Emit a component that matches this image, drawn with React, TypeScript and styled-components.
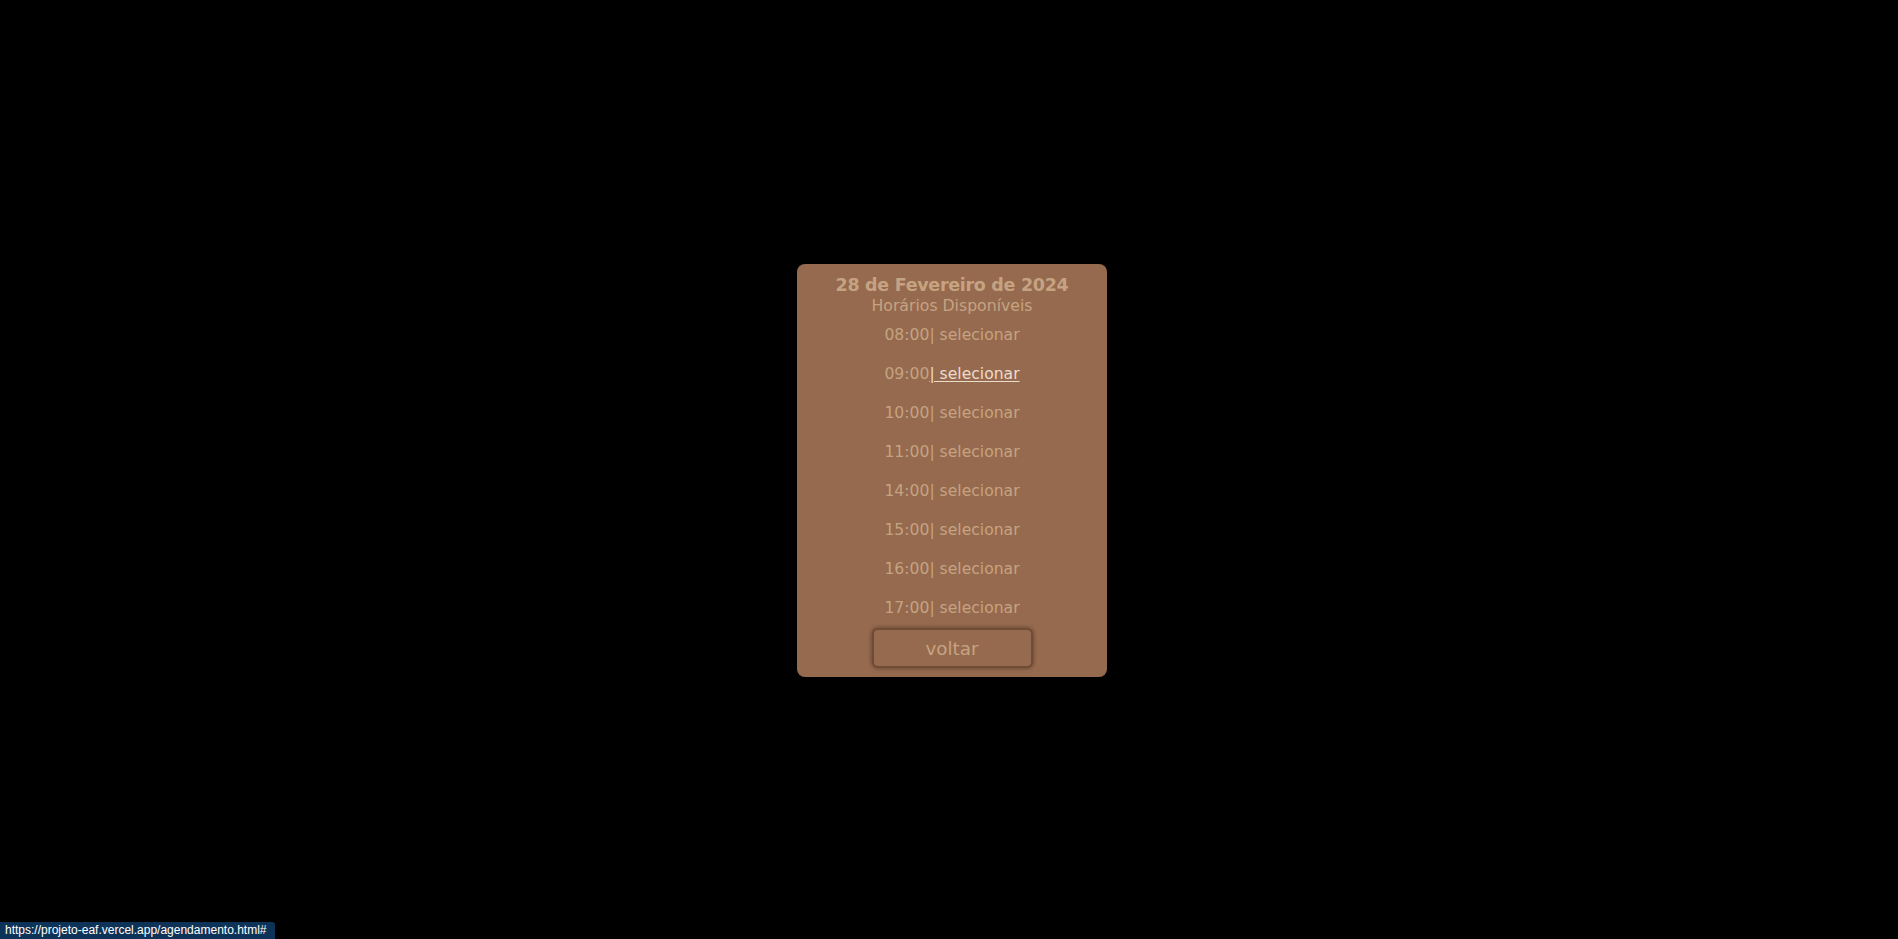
import React from "react";
import styled, { createGlobalStyle } from "styled-components";

const GlobalStyle = createGlobalStyle`
  html, body {
    margin: 0;
    padding: 0;
    background: #000;
    font-family: "DejaVu Sans", "Liberation Sans", sans-serif;
  }
`;

const Page = styled.main`
  min-height: 100vh;
  box-sizing: border-box;
  padding-top: 2px;
  display: flex;
  align-items: center;
  justify-content: center;
  background: #000;
`;

const Card = styled.section`
  width: 310px;
  box-sizing: border-box;
  padding: 10px 0 9px;
  background: #966a4e;
  border-radius: 8px;
  display: flex;
  flex-direction: column;
  align-items: center;
  color: #c5a382;
  margin-left: 6px;
`;

const Title = styled.h1`
  margin: 0;
  font-size: 17.5px;
  line-height: 22px;
  font-weight: 700;
  letter-spacing: -0.3px;
  color: #c5a382;
`;

const Subtitle = styled.h2`
  margin: 0;
  font-size: 15.7px;
  line-height: 19px;
  font-weight: 400;
  color: #c5a382;
`;

const SlotList = styled.ul`
  list-style: none;
  margin: 10px 0 0;
  padding: 0;
  display: flex;
  flex-direction: column;
  align-items: center;
  gap: 19px;
`;

const Slot = styled.li`
  font-size: 15.6px;
  line-height: 20px;
  color: #c5a382;
  white-space: nowrap;
`;

const SelectLink = styled.a<{ $active?: boolean }>`
  color: ${(p) => (p.$active ? "#ecdccd" : "#c5a382")};
  text-decoration: ${(p) => (p.$active ? "underline" : "none")};
  text-underline-offset: 2px;
  cursor: pointer;
`;

const BackButton = styled.button`
  margin-top: 10px;
  width: 161px;
  height: 40px;
  box-sizing: border-box;
  background: #966a4e;
  border: 2px solid #6f4c36;
  border-radius: 6px;
  box-shadow: 0 0 4px rgba(40, 22, 10, 0.55);
  color: #c5a382;
  font-family: "DejaVu Sans", "Liberation Sans", sans-serif;
  font-size: 18.3px;
  padding: 0;
  cursor: pointer;
`;

const StatusBubble = styled.div`
  position: fixed;
  left: 0;
  bottom: 0;
  height: 17px;
  padding: 0 8px 0 5px;
  background: #0e3358;
  color: #ffffff;
  border-top-right-radius: 3px;
  font-family: "Liberation Sans", sans-serif;
  font-size: 12px;
  line-height: 17px;
  white-space: nowrap;
`;

const slots = ["08:00", "09:00", "10:00", "11:00", "14:00", "15:00", "16:00", "17:00"];

export default function App() {
  return (
    <>
      <GlobalStyle />
      <Page>
        <Card>
          <Title>28 de Fevereiro de 2024</Title>
          <Subtitle>Horários Disponíveis</Subtitle>
          <SlotList>
            {slots.map((t) => (
              <Slot key={t}>
                {t}
                <SelectLink href="#" $active={t === "09:00"}>
                  | selecionar
                </SelectLink>
              </Slot>
            ))}
          </SlotList>
          <BackButton>voltar</BackButton>
        </Card>
      </Page>
      <StatusBubble>https://projeto-eaf.vercel.app/agendamento.html#</StatusBubble>
    </>
  );
}
